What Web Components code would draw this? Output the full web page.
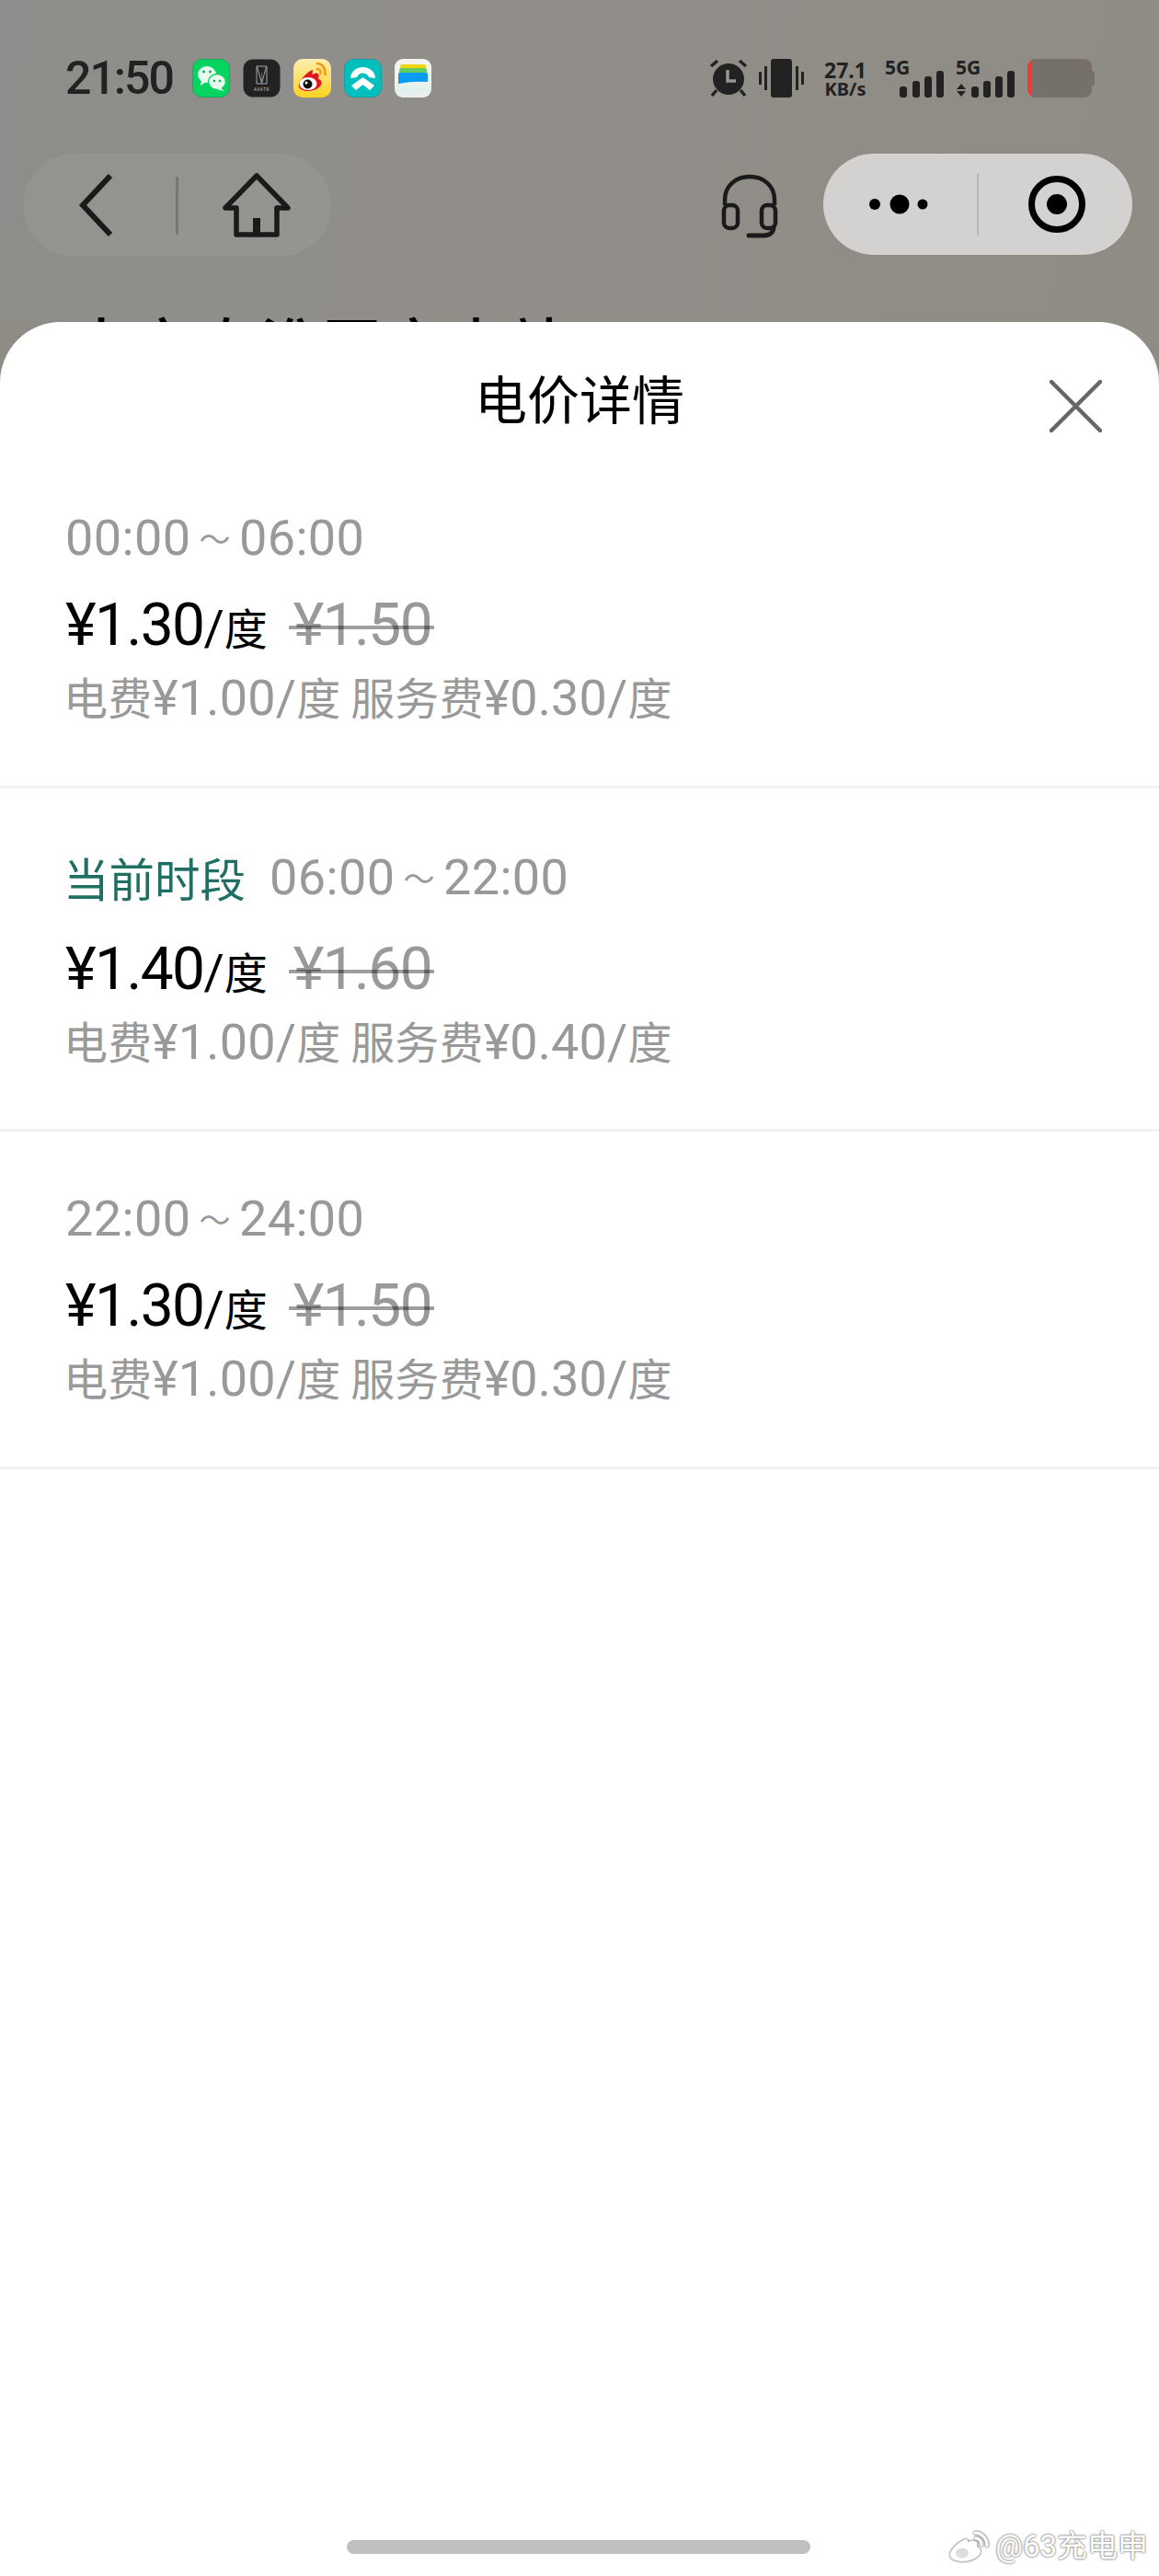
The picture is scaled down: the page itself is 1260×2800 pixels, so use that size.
<!DOCTYPE html>
<html>
<head>
<meta charset="utf-8">
<style>
    html, body { margin: 0; padding: 0; background: #fff; }
    body { width: 1260px; height: 2800px; overflow: hidden; }
    price-app { display: block; }
</style>
</head>
<body>
<price-app></price-app>

<template id="price-row-tpl">
    <style>
        :host { display: block; padding: 60px 0 63px 71px; border-bottom: 3px solid #f2f2f2; font-family: Roboto, "Noto Sans CJK SC", sans-serif; }
        :host([current]) { padding-bottom: 62px; }
        .cjk { font-family: "Noto Sans CJK SC", sans-serif; }
        .period { display: flex; align-items: center; height: 68px; font-size: 54px; letter-spacing: .4px; color: #999; white-space: nowrap; }
        :host([current]) .period { height: 72px; }
        .tag { display: none; font-size: 49.5px; letter-spacing: 0; color: #1f6f62; margin: 0 26px 0 -2px; font-family: "Noto Sans CJK SC", sans-serif; }
        :host([current]) .tag { display: block; }
        .tilde { font-size: 34px; margin: 0 9px; font-family: "Noto Sans CJK SC", sans-serif; }
        .price { display: flex; align-items: baseline; height: 80px; line-height: 80px; margin-top: 22px; font-size: 64px; letter-spacing: -1.6px; color: #000; white-space: nowrap; }
        :host([current]) .price { margin-top: 25px; }
        .unit { font-size: 54px; letter-spacing: 0; }
        .unit .cjk { font-size: 47px; }
        .old { position: relative; margin-left: 28px; color: #999; }
        .old::after { content: ""; position: absolute; left: -5px; right: -3px; top: 40px; height: 4px; background: rgba(0,0,0,.38); }
        .detail { height: 70px; line-height: 70px; margin: 1px 0 0 -2px; font-size: 54px; letter-spacing: .15px; color: #999; white-space: nowrap; }
        .detail .cjk { font-size: 48px; }
    </style>
    <div class="period"><span class="tag">当前时段</span><span id="from"></span><span class="tilde">～</span><span id="to"></span></div>
    <div class="price">
        <span id="now"></span><span class="unit">/<span class="cjk">度</span></span>
        <span class="old" id="old"></span>
    </div>
    <div class="detail"><span class="cjk">电费</span>¥<span id="fee"></span>/<span class="cjk">度 服务费</span>¥<span id="svc"></span>/<span class="cjk">度</span></div>
</template>

<script>
class StatusBar extends HTMLElement {
    constructor() {
        super();
        this.attachShadow({ mode: "open" });
        this.shadowRoot.innerHTML = `
            <style>
                :host { display: flex; align-items: center; height: 42px; padding: 0 70px 0 71px; color: #222; font-family: Roboto, sans-serif; }
                .time { width: 138px; font-size: 50px; line-height: 42px; font-weight: 500; letter-spacing: -2px; }
                .apps { display: flex; gap: 14px; }
                .apps svg { width: 41px; height: 42px; display: block; }
                .right { margin-left: auto; display: flex; align-items: center; height: 42px; }
                .right svg { display: block; flex: none; }
                .speed { width: 50px; margin: 0 18px 0 20px; text-align: center; font-weight: 700; font-family: "Noto Sans", sans-serif; }
                .speed div:first-child { font-size: 23px; line-height: 24px; }
                .speed div:last-child { font-size: 20px; line-height: 18px; }
                text { font-family: "Noto Sans", sans-serif; font-weight: 700; font-size: 21px; fill: #222; }
            </style>
            <div class="time">21:50</div>
            <div class="apps">
                <svg viewBox="0 0 41 42"><rect x=".5" y=".5" width="40" height="41" rx="10" fill="#07d460" stroke="#17a862"/><ellipse cx="16" cy="17" rx="10" ry="9" fill="#e9f9ef"/><path d="M10 23l-1 6 6-4z" fill="#e9f9ef"/><ellipse cx="27" cy="25" rx="9.500" ry="8.500" fill="#e9f9ef" stroke="#07d460" stroke-width="1.500"/><path d="M31 31l3 4-7-2z" fill="#e9f9ef"/><g fill="#07b050"><circle cx="12.500" cy="14" r="1.400"/><circle cx="19.500" cy="14" r="1.400"/><circle cx="24" cy="24" r="1.300"/><circle cx="30" cy="24" r="1.300"/></g></svg>
                <svg viewBox="0 0 41 42"><rect x=".5" y=".5" width="40" height="41" rx="10" fill="#222"/><path d="M15 8h11v19h-11zM15.500 8.500l5 18 5-18" fill="none" stroke="#b5b5b5" stroke-width=".9"/><path d="M20.500 26.500V15" stroke="#888" stroke-width=".6"/><text x="20.500" y="35" style="font-size:4.500px;font-weight:400;fill:#ccc;letter-spacing:.8px" text-anchor="middle">AVATR</text></svg>
                <svg viewBox="0 0 41 42"><defs><linearGradient id="wb" x1="0" y1="0" x2="0" y2="1"><stop offset="0" stop-color="#ffeeb0"/><stop offset="1" stop-color="#ffd21f"/></linearGradient></defs><rect width="41" height="42" rx="10" fill="url(#wb)"/><path d="M20 13c-4 1-9 6-13 11-3 5-3 8 0 10 3 2 9 3 14 1 6-2 10-6 8-10-1-2-3-2-3-3 1-2 1-4-.5-5-1.500-1-4 0-6 1 0-2 1-5.500.5-5z" fill="#e0161c" transform="translate(1 -1)"/><ellipse cx="16" cy="27" rx="9.500" ry="7" fill="#fff"/><circle cx="15.500" cy="27.500" r="5" fill="#111"/><circle cx="14" cy="26" r="1.500" fill="#fff"/><path d="M26 5c5 0 9 5 8.500 12M26 11c3 0 4 2.500 3.500 5" fill="none" stroke="#f59a14" stroke-width="2.600" stroke-linecap="round"/></svg>
                <svg viewBox="0 0 41 42"><rect x=".5" y=".5" width="40" height="41" rx="10" fill="#02bfbf" stroke="#10a0a0"/><path d="M7 21c0-7 6-12 13.500-12S34 14 34 21l-7-1c-1-3-3.500-4.500-6.500-4.500S15 17 14 20z" fill="#fff"/><path d="M8 29l12.500-9L33 29l-5 5-7.500-6-7.500 6z" fill="#fff"/></svg>
                <svg viewBox="0 0 41 42"><defs><linearGradient id="wl" x1="0" y1="0" x2="0" y2="1"><stop offset="0" stop-color="#f3f3f0"/><stop offset=".6" stop-color="#eef4ea"/><stop offset=".8" stop-color="#dff0ee"/><stop offset="1" stop-color="#eee"/></linearGradient></defs><rect width="40" height="42" rx="9" fill="url(#wl)"/><path d="M6 9q0-3 2-3h24q2 0 2 3v3H6z" fill="#f2d30f"/><path d="M5 13q0-3 2-3h26q2 0 2 3v5H5z" fill="#63cb5f"/><path d="M4 17q0-2 2-2h28q2 0 2 2v8q-16-1-32 2z" fill="#0a9bf3"/></svg>
            </div>
            <div class="right">
                <svg width="44" height="42" viewBox="0 0 44 42"><path d="M3 8l7-6M41 8l-7-6" stroke="#222" stroke-width="3.500"/><circle cx="22" cy="22" r="17" fill="#222"/><path d="M21 12v12h9" fill="none" stroke="#98958e" stroke-width="3.500"/><path d="M9 34l-5 6M35 34l5 6" stroke="#222" stroke-width="3.500"/></svg>
                <svg width="49" height="42" viewBox="0 0 49 42" style="margin-left:11px"><rect x="13" width="23" height="42" rx="3" fill="#222"/><path d="M1.500 14v14M7.500 8v26M41.500 8v26M47.500 14v14" stroke="#222" stroke-width="3"/></svg>
                <div class="speed"><div>27.1</div><div>KB/s</div></div>
                <svg width="64" height="42" viewBox="0 0 64 42"><text x="0" y="17">5G</text><g fill="#222"><rect x="16" y="30" width="8" height="12" rx="3"/><rect x="30" y="24" width="8" height="18" rx="3"/><rect x="43" y="19" width="8" height="23" rx="3"/><rect x="56" y="13" width="8" height="29" rx="3"/></g></svg>
                <svg width="64" height="42" viewBox="0 0 64 42" style="margin-left:13px"><text x="0" y="17">5G</text><g fill="#222"><path d="M6 27l5 6H1zM1 35h10l-5 6z"/><rect x="17" y="30" width="8" height="12" rx="3"/><rect x="30" y="24" width="8" height="18" rx="3"/><rect x="43" y="19" width="8" height="23" rx="3"/><rect x="56" y="13" width="8" height="29" rx="3"/></g></svg>
                <svg width="73" height="42" viewBox="0 0 73 42" style="margin-left:14px"><rect x="0" y="0" width="70" height="42" rx="9" fill="#f03a30"/><path d="M6 0h55q9 0 9 9v24q0 9-9 9H6q-2 0-2-4V4q0-4 2-4z" fill="#75716a"/><path d="M70 13h1q2 0 2 2v12q0 2-2 2h-1z" fill="#75716a"/></svg>
            </div>
        `;
    }
}
customElements.define("status-bar", StatusBar);

class NavBar extends HTMLElement {
    constructor() {
        super();
        this.attachShadow({ mode: "open" });
        this.shadowRoot.innerHTML = `
            <style>
                :host { display: flex; align-items: flex-start; margin-top: 61px; padding: 0 29px 0 25px; }
                svg { display: block; flex: none; }
                .left, .menu { display: flex; align-items: center; }
                .left { width: 335px; height: 112px; border-radius: 56px; background: rgba(255,255,255,.06); }
                .menu { width: 336px; height: 110px; border-radius: 55px; background: #d3d2d0; }
                .sep { flex: none; width: 3px; height: 63px; }
                .left .sep { background: #777; margin-left: 66px; }
                .menu .sep { width: 2px; height: 67px; background: #b5b5b3; margin-left: 53px; }
                .spacer { flex: 1; }
                .headset { margin: 22px 48px 0 0; }
            </style>
            <div class="left">
                <svg width="40" height="72" viewBox="0 0 40 72" style="margin-left:60px"><path d="M35 4L5 36l30 32" fill="none" stroke="#1a1a1a" stroke-width="6"/></svg>
                <div class="sep"></div>
                <svg width="76" height="72" viewBox="0 0 76 72" style="margin-left:47px"><path d="M38 4L4 39h12v29h44V39h12zM38 68V52" fill="none" stroke="#1a1a1a" stroke-width="5.500" stroke-linejoin="round"/><rect x="34" y="50" width="8" height="18" fill="#1a1a1a"/></svg>
            </div>
            <div class="spacer"></div>
            <svg class="headset" width="64" height="70" viewBox="0 0 64 70"><path d="M5 34V28C5 13 17 3 32 3s27 10 27 25v6" fill="none" stroke="#1a1a1a" stroke-width="4.500"/><rect x="4" y="34" width="15" height="25" rx="6" fill="none" stroke="#1a1a1a" stroke-width="4.500"/><rect x="45" y="34" width="15" height="25" rx="6" fill="none" stroke="#1a1a1a" stroke-width="4.500"/><path d="M58 58c0 5-4 9-11 9H31" fill="none" stroke="#1a1a1a" stroke-width="5" stroke-linecap="round"/></svg>
            <div class="menu">
                <svg width="68" height="26" viewBox="0 0 68 26" style="margin-left:46px"><circle cx="10" cy="13" r="6" fill="#000"/><circle cx="37" cy="13" r="10.500" fill="#000"/><circle cx="62" cy="13" r="5.500" fill="#000"/></svg>
                <div class="sep"></div>
                <svg width="62" height="62" viewBox="0 0 62 62" style="margin-left:54px"><circle cx="31" cy="31" r="27.500" fill="none" stroke="#000" stroke-width="7"/><circle cx="31" cy="31" r="11" fill="#000"/></svg>
            </div>
        `;
    }
}
customElements.define("nav-bar", NavBar);

class PriceRow extends HTMLElement {
    constructor() {
        super();
        this.attachShadow({ mode: "open" });
        const tpl = document.getElementById("price-row-tpl");
        this.shadowRoot.appendChild(tpl.content.cloneNode(true));
    }

    connectedCallback() {
        const [from, to] = this.getAttribute("period").split("-");
        const set = (id, val) => (this.shadowRoot.getElementById(id).textContent = val);
        set("from", from);
        set("to", to);
        set("now", "¥" + this.getAttribute("now"));
        set("old", "¥" + this.getAttribute("old"));
        set("fee", this.getAttribute("fee"));
        set("svc", this.getAttribute("svc"));
    }
}
customElements.define("price-row", PriceRow);

class PriceSheet extends HTMLElement {
    constructor() {
        super();
        this.attachShadow({ mode: "open" });
        this.shadowRoot.innerHTML = `
            <style>
                :host { display: block; position: relative; height: 2450px; background: #fff; border-radius: 66px 66px 0 0; }
                header { display: flex; align-items: center; justify-content: center; position: relative; height: 140px; }
                h1 { margin: 22px 0 0; font: 400 57px/1 "Noto Sans CJK SC", sans-serif; color: #000; }
                .close { position: absolute; right: 62px; top: 63px; display: block; }
                .bar { position: absolute; left: 377px; top: 2411px; width: 504px; height: 15px; border-radius: 8px; background: #bfbfbf; }
                .mark { position: absolute; right: 12px; top: 2400px; display: flex; align-items: center; gap: 5px; color: #fff; font: 400 33px/36px Roboto, "Noto Sans CJK SC", sans-serif; text-shadow: 0 0 2px #888, 0 0 2px #888, 0 0 3px #bbb; }
                .mark svg { display: block; filter: drop-shadow(0 0 1px #888) drop-shadow(0 0 1px #999); }
            </style>
            <header>
                <h1>电价详情</h1>
                <svg class="close" width="57" height="57" viewBox="0 0 57 57"><path d="M2 2l53 53M55 2L2 55" stroke="#666" stroke-width="4.500" stroke-linecap="round"/></svg>
            </header>
            <slot></slot>
            <div class="bar"></div>
            <div class="mark">
                <svg width="46" height="34" viewBox="0 0 46 34"><path d="M19 9C11 12 2 20 2 26c0 5 7 7 14 7 9 0 19-5 19-11 0-3-3-4-4-5 1-3 0-6-3-6-3-1-6 1-7 1 0-3-1-4-2-3z" fill="#fff"/><ellipse cx="15" cy="24" rx="7" ry="5.500" fill="#ddd"/><path d="M29 2c7 0 13 6 13 14M30 8c3 0 6 3 6 7" fill="none" stroke="#fff" stroke-width="3" stroke-linecap="round"/></svg>
                <span>@63充电申</span>
            </div>
        `;
    }
}
customElements.define("price-sheet", PriceSheet);

class PriceApp extends HTMLElement {
    constructor() {
        super();
        this.attachShadow({ mode: "open" });
        this.shadowRoot.innerHTML = `
            <style>
                :host { display: block; height: 2800px; position: relative; background: #8f8c85; }
                .top { height: 286px; padding-top: 64px; overflow: hidden; background: linear-gradient(100deg, #8e8d8b 0%, #918e89 50%, #8f8c84 100%); }
                .page-title { margin: 54px 0 0 78px; font: 500 64px/76px "Noto Sans CJK SC", sans-serif; color: #000; letter-spacing: 4px; white-space: nowrap; }
            </style>
            <div class="top">
                <status-bar></status-bar>
                <nav-bar></nav-bar>
                <div class="page-title">南京秦淮区充电站</div>
            </div>
            <price-sheet>
                <price-row period="00:00-06:00" now="1.30" old="1.50" fee="1.00" svc="0.30"></price-row>
                <price-row current period="06:00-22:00" now="1.40" old="1.60" fee="1.00" svc="0.40"></price-row>
                <price-row period="22:00-24:00" now="1.30" old="1.50" fee="1.00" svc="0.30"></price-row>
            </price-sheet>
        `;
    }
}
customElements.define("price-app", PriceApp);
</script>
</body>
</html>
